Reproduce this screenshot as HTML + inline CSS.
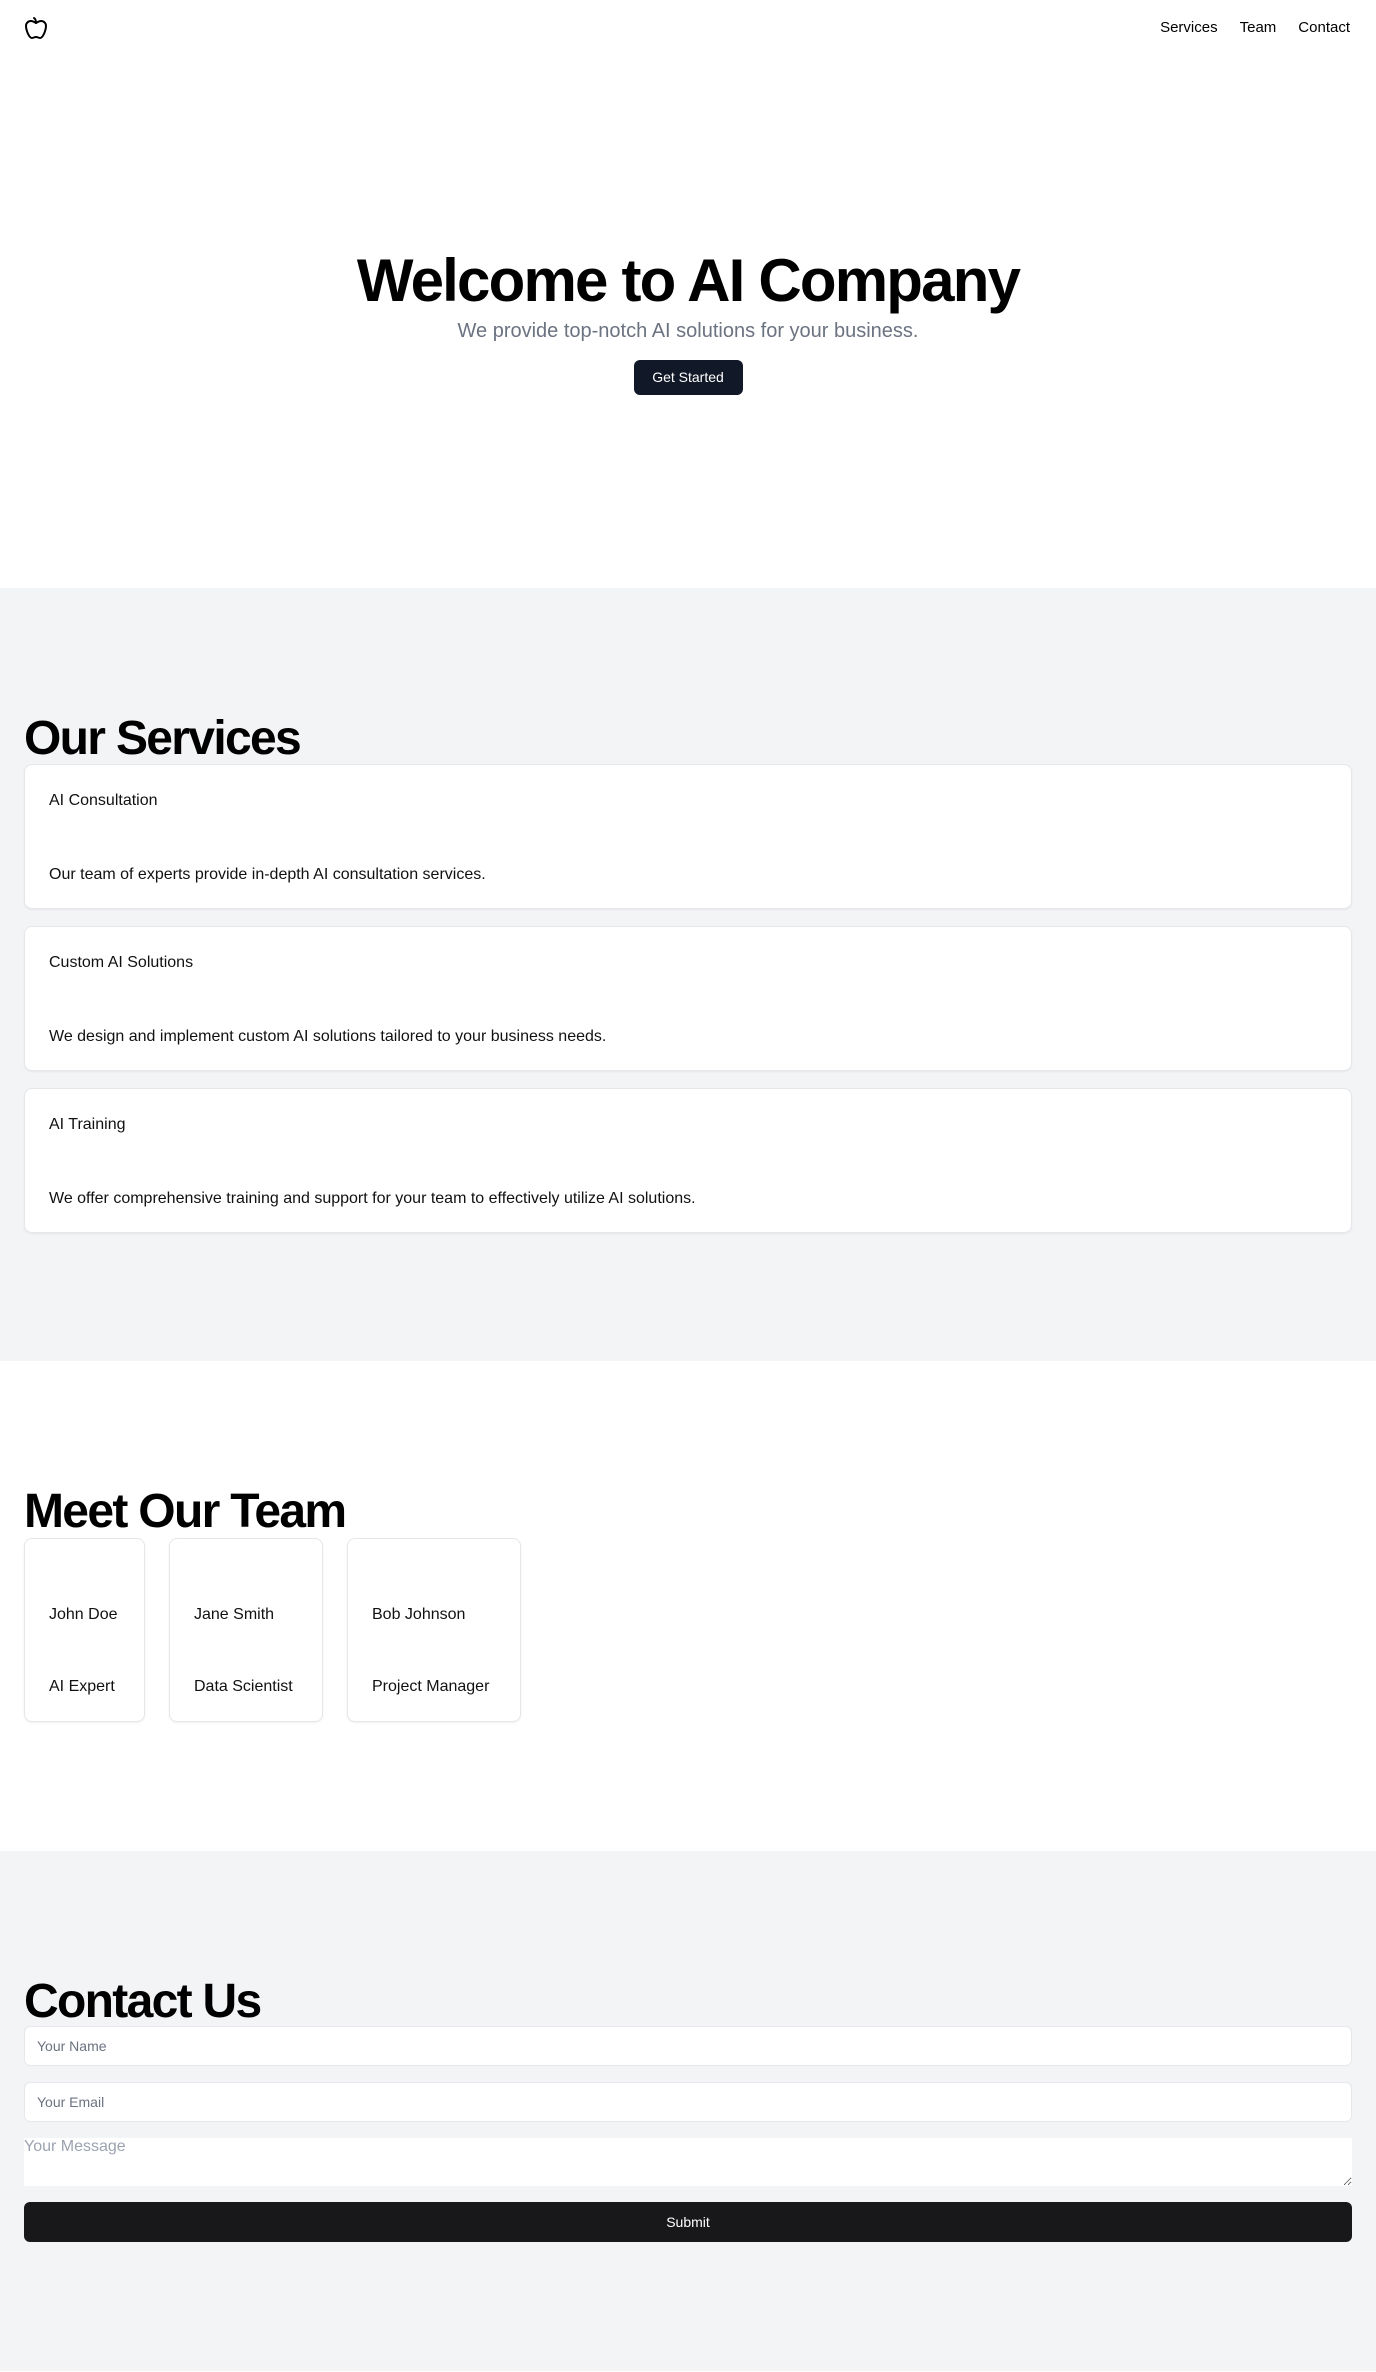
<!DOCTYPE html>
<html><head><meta charset="utf-8"><style>
*{box-sizing:border-box;margin:0;padding:0}
body{width:1376px;font-family:"Liberation Sans",sans-serif;color:#111;background:#fff}
header{height:56px;display:flex;align-items:center;justify-content:space-between;padding:0 26px 0 24px}
nav a{font-size:15px;font-weight:500;color:#000;text-decoration:none;margin-left:22px}
.hero{height:532px;text-align:center;padding-top:195px}
.hero h1{font-size:60px;line-height:60px;font-weight:700;letter-spacing:-0.03em;color:#000}
.hero p{font-size:20px;color:#6b7280;margin-top:6px;line-height:28px}
.btn{display:inline-block;margin-top:15px;background:#111827;color:#fff;font-size:14px;width:109px;height:35px;line-height:35px;border-radius:6px}
section{padding:127px 24px 128px}
.gray{background:#f3f4f6}
h2{font-size:48px;line-height:48px;font-weight:700;letter-spacing:-0.035em;color:#000}
.card{background:#fff;border:1px solid #e5e7eb;border-radius:8px;box-shadow:0 1px 2px rgba(0,0,0,.06);font-size:16px;line-height:24px}
.svc{height:145px;padding:24px;margin-bottom:17px;margin-top:1px}
.svc .d{margin-top:50px}
.team{display:flex;gap:24px;margin-top:2px}
.tm{height:184px;padding:64px 24px 0}
.tm .r{margin-top:48px}
input{display:block;width:100%;height:40px;border:1px solid #e5e7eb;border-radius:6px;background:#fff;padding:0 12px;font-size:14px;font-family:inherit;margin-bottom:16px}
input::placeholder{color:#6b7280}
textarea{display:block;width:100%;height:48px;border:none;background:#fff;font-size:16px;font-family:inherit;padding:0}
textarea::placeholder{color:#9ca3af}
.sub{margin-top:16px;height:40px;background:#18181b;color:#fff;border-radius:6px;text-align:center;line-height:40px;font-size:14px}
</style></head><body>
<header>
<svg width="24" height="24" viewBox="0 0 24 24" fill="none" stroke="#000" stroke-width="2" stroke-linecap="round" stroke-linejoin="round"><path d="M12 20.94c1.5 0 2.75 1.06 4 1.06 3 0 6-8 6-12.22A4.91 4.91 0 0 0 17 5c-2.22 0-4 1.44-5 2-1-.56-2.78-2-5-2a4.9 4.9 0 0 0-5 4.78C2 14 5 22 8 22c1.25 0 2.5-1.06 4-1.06Z"/><path d="M10 2c1 .5 2 2 2 5"/></svg>
<nav><a>Services</a><a>Team</a><a>Contact</a></nav>
</header>
<div class="hero">
<h1>Welcome to AI Company</h1>
<p>We provide top-notch AI solutions for your business.</p>
<div class="btn">Get Started</div>
</div>
<section class="gray" style="height:773px">
<h2>Our Services</h2>
<div class="card svc"><div>AI Consultation</div><div class="d">Our team of experts provide in-depth AI consultation services.</div></div>
<div class="card svc"><div>Custom AI Solutions</div><div class="d">We design and implement custom AI solutions tailored to your business needs.</div></div>
<div class="card svc"><div>AI Training</div><div class="d">We offer comprehensive training and support for your team to effectively utilize AI solutions.</div></div>
</section>
<section style="height:490px">
<h2>Meet Our Team</h2>
<div class="team">
<div class="card tm" style="width:121px"><div>John Doe</div><div class="r">AI Expert</div></div>
<div class="card tm" style="width:154px"><div>Jane Smith</div><div class="r">Data Scientist</div></div>
<div class="card tm" style="width:174px"><div>Bob Johnson</div><div class="r">Project Manager</div></div>
</div>
</section>
<section class="gray" style="height:520px">
<h2>Contact Us</h2>
<input placeholder="Your Name">
<input placeholder="Your Email">
<textarea placeholder="Your Message"></textarea>
<div class="sub">Submit</div>
</section>
</body></html>
